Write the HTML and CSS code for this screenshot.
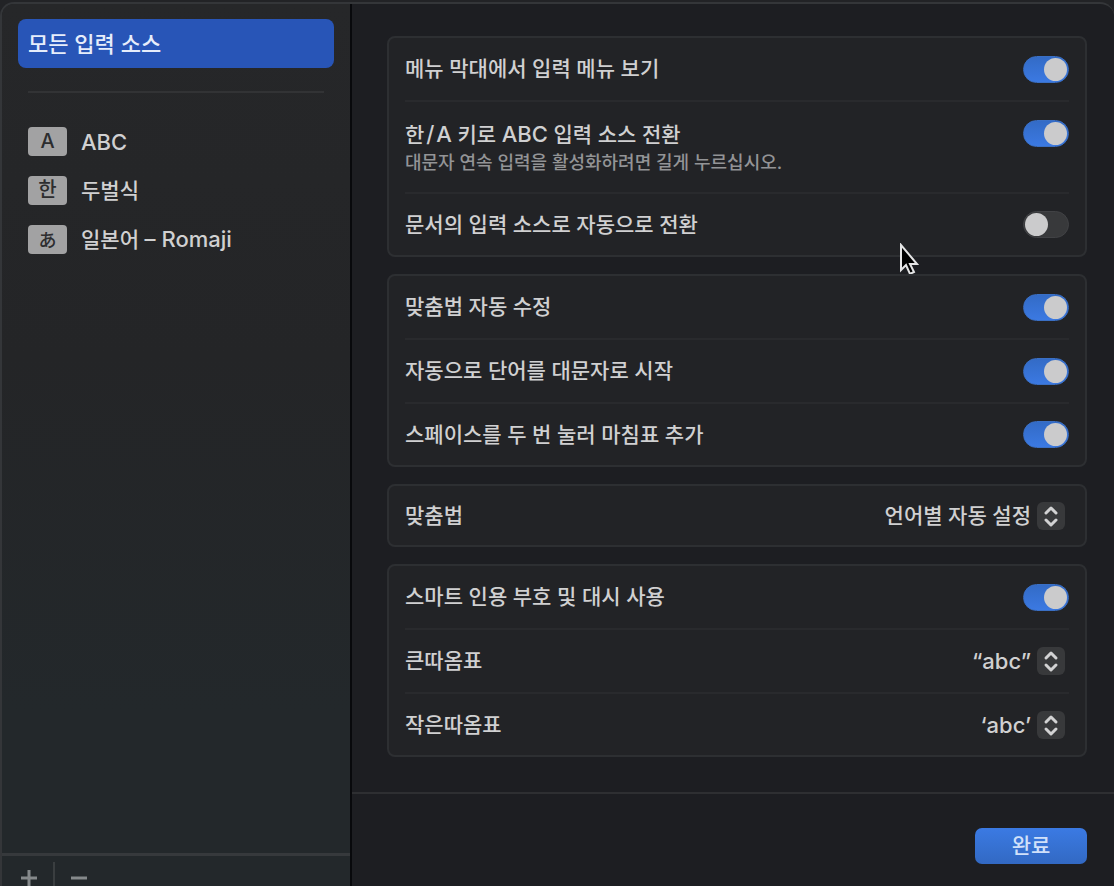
FILE: index.html
```html
<!DOCTYPE html>
<html lang="ko">
<head>
    <meta charset="UTF-8">
    <meta name="viewport" content="width=device-width, initial-scale=1.0">
    <title>입력 소스</title>
    <link rel="stylesheet" href="styles.css">
</head>
<body>
    <div class="window">
        <nav class="sidebar">
            <div class="sources">
                <button class="source selected">모든 입력 소스</button>
                <hr>
                <button class="source"><span class="key latin">A</span><span class="latin">ABC</span></button>
                <button class="source"><span class="key">한</span>두벌식</button>
                <button class="source"><span class="key kana" lang="ja">あ</span><span>일본어 <span class="latin">– Romaji</span></span></button>
            </div>
            <div class="sidebar-footer">
                <button aria-label="추가">
                    <svg width="16" height="16" viewBox="0 0 16 16"><path d="M8 0v16M0 8h16"/></svg>
                </button>
                <span class="divider"></span>
                <button aria-label="제거">
                    <svg width="16" height="16" viewBox="0 0 16 16"><path d="M0 8h16"/></svg>
                </button>
            </div>
        </nav>

        <main class="content">
            <div class="cards">
                <section class="card">
                    <svg class="cursor" width="21" height="34" viewBox="0 0 21 34"><path d="M2 2v25l5-5 4 9 4-2-4-8h7z"/></svg>
                    <div class="row">
                        <label for="menu">메뉴 막대에서 입력 메뉴 보기</label>
                        <input type="checkbox" class="switch" id="menu" checked>
                    </div>
                    <div class="row tall">
                        <label for="capslock">한<span class="latin">&#8202;/&#8202;A</span> 키로 <span class="latin">ABC</span> 입력 소스 전환
                            <small>대문자 연속 입력을 활성화하려면 길게 누르십시오.</small>
                        </label>
                        <input type="checkbox" class="switch" id="capslock" checked>
                    </div>
                    <div class="row">
                        <label for="document">문서의 입력 소스로 자동으로 전환</label>
                        <input type="checkbox" class="switch" id="document">
                    </div>
                </section>

                <section class="card">
                    <div class="row">
                        <label for="correct">맞춤법 자동 수정</label>
                        <input type="checkbox" class="switch" id="correct" checked>
                    </div>
                    <div class="row">
                        <label for="capital">자동으로 단어를 대문자로 시작</label>
                        <input type="checkbox" class="switch" id="capital" checked>
                    </div>
                    <div class="row">
                        <label for="period">스페이스를 두 번 눌러 마침표 추가</label>
                        <input type="checkbox" class="switch" id="period" checked>
                    </div>
                </section>

                <section class="card">
                    <div class="row compact">
                        <label for="spelling">맞춤법</label>
                        <div class="popup">
                            <select id="spelling"><option>언어별 자동 설정</option></select>
                            <svg width="28" height="28" viewBox="0 0 28 28"><path d="M9 11l5-5 5 5M9 18l5 5 5-5"/></svg>
                        </div>
                    </div>
                </section>

                <section class="card">
                    <div class="row">
                        <label for="smart">스마트 인용 부호 및 대시 사용</label>
                        <input type="checkbox" class="switch" id="smart" checked>
                    </div>
                    <div class="row">
                        <label for="double">큰따옴표</label>
                        <div class="popup">
                            <select id="double" class="latin"><option>“abc”</option></select>
                            <svg width="28" height="28" viewBox="0 0 28 28"><path d="M9 11l5-5 5 5M9 18l5 5 5-5"/></svg>
                        </div>
                    </div>
                    <div class="row">
                        <label for="single">작은따옴표</label>
                        <div class="popup">
                            <select id="single" class="latin"><option>‘abc’</option></select>
                            <svg width="28" height="28" viewBox="0 0 28 28"><path d="M9 11l5-5 5 5M9 18l5 5 5-5"/></svg>
                        </div>
                    </div>
                </section>
            </div>

            <footer class="actions">
                <button class="done">완료</button>
            </footer>
        </main>
    </div>
</body>
</html>
```
FILE: styles.css
```css
* {
    box-sizing: border-box;
}

body {
    margin: 0;
    padding-top: 2px;
    background-color: #222326;
    color: #d0d0d1;
    font-family: Inter, "Noto Sans CJK KR", sans-serif;
    font-size: 21px;
    font-weight: 500;
    line-height: 28px;
}

button,
select {
    margin: 0;
    padding: 0;
    border: none;
    background: none;
    color: inherit;
    font: inherit;
}

.latin {
    font-size: 22px;
}

.window {
    display: flex;
    height: calc(100vh - 2px);
    border: 2px solid #343639;
    border-width: 2px 0 0 2px;
    border-radius: 14px 14px 0 0;
    background-color: #1d1e22;
    overflow: hidden;
}

/* sidebar */

.sidebar {
    display: flex;
    flex-direction: column;
    flex: 0 0 350px;
    border-right: 2px solid #08090c;
    background: linear-gradient(#262729, #242527 40%, #23282b 80%);
}

.sources {
    flex: 1;
    padding: 15px 16px;
}

.source {
    display: flex;
    align-items: center;
    gap: 14px;
    width: 100%;
    height: 49px;
    padding: 0 10px;
    border-radius: 8px;
    text-align: left;
}

.selected {
    background-color: #2855b7;
    color: #e6edfb;
    font-size: 22px;
}

.sources hr {
    height: 2px;
    margin: 23px 10px 24px;
    border: none;
    background-color: #323335;
}

.key {
    width: 39px;
    height: 29px;
    border-radius: 4px;
    background-color: #a2a2a3;
    color: #2d2d2f;
    font-size: 20px;
    line-height: 29px;
    text-align: center;
}

.kana {
    font-family: "Noto Sans CJK JP", sans-serif;
    font-size: 18px;
}

.sidebar-footer {
    display: flex;
    height: 33px;
    padding: 6px 19px 0;
    border-top: 3px solid #36393c;
    overflow: hidden;
}

.sidebar-footer button {
    height: 32px;
    line-height: 0;
}

.sidebar-footer path {
    stroke: #85898b;
    stroke-width: 3;
}

.divider {
    width: 2px;
    height: 32px;
    margin: 0 16px;
    background-color: #3a3e40;
}

/* settings */

.content {
    display: flex;
    flex-direction: column;
    flex: 1;
}

.cards {
    display: flex;
    flex-direction: column;
    flex: 1;
    gap: 17px;
    padding: 32px 27px 0 35px;
}

.card {
    position: relative;
    padding: 0 16px;
    border: 2px solid #2d2f32;
    border-radius: 8px;
    background-color: #222326;
}

.row {
    display: flex;
    justify-content: space-between;
    align-items: center;
    height: 64px;
    border-bottom: 2px solid #292a2d;
}

.row:last-child {
    height: 61px;
    border-bottom: none;
}

.row.compact {
    height: 59px;
}

.row.tall {
    align-items: flex-start;
    height: 92px;
    padding-top: 18px;
}

small {
    display: block;
    color: #939496;
    font-size: 18px;
}

.switch {
    appearance: none;
    width: 46px;
    height: 27px;
    margin: 0;
    padding: 1px;
    border: 1px solid #414245;
    border-radius: 14px;
    background-color: #38393b;
}

.switch::before {
    content: "";
    display: block;
    width: 23px;
    height: 23px;
    border-radius: 50%;
    background-color: #cbcbcc;
}

.switch:checked {
    border-color: #3a6fc4;
    background: linear-gradient(#336bc6, #3b79e2);
}

.switch:checked::before {
    margin-left: auto;
}

.popup {
    position: relative;
    padding-right: 4px;
}

.popup select {
    display: block;
    appearance: none;
    height: 28px;
    padding-right: 34px;
    text-align-last: right;
}

.popup svg {
    position: absolute;
    top: 0;
    right: 4px;
    border-radius: 6px;
    background-color: #38393b;
    pointer-events: none;
}

.popup path {
    fill: none;
    stroke: #d2d2d3;
    stroke-width: 3;
    stroke-linecap: round;
    stroke-linejoin: round;
}

.cursor {
    position: absolute;
    right: 165px;
    bottom: -22px;
}

.cursor path {
    fill: #000;
    stroke: #e4e4e5;
    stroke-width: 2;
}

.actions {
    display: flex;
    justify-content: flex-end;
    padding: 34px 27px 22px;
    border-top: 2px solid #2e2f32;
}

.done {
    width: 112px;
    height: 36px;
    border-radius: 7px;
    background: linear-gradient(#3b7ae3, #3269c3);
    color: #d0e0fa;
}
```
